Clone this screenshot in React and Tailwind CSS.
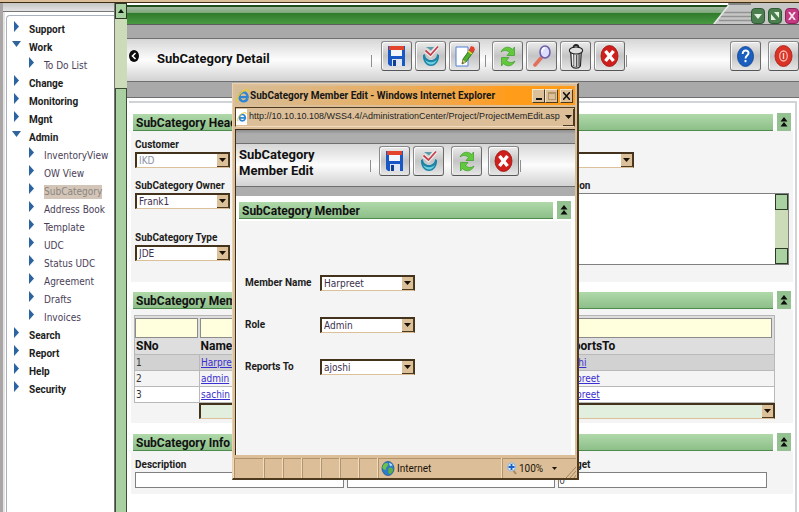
import React from "react";

const NAV = [
  { label: "Support" },
  { label: "Work", open: true, children: ["To Do List"] },
  { label: "Change" },
  { label: "Monitoring" },
  { label: "Mgnt" },
  {
    label: "Admin",
    open: true,
    children: [
      "InventoryView",
      "OW View",
      "SubCategory",
      "Address Book",
      "Template",
      "UDC",
      "Status UDC",
      "Agreement",
      "Drafts",
      "Invoices",
    ],
  },
  { label: "Search" },
  { label: "Report" },
  { label: "Help" },
  { label: "Security" },
];

const MEMBERS = [
  { no: 1, name: "Harpreet", reportsTo: "ajoshi", row: "bg-[#d2d2d2]" },
  { no: 2, name: "admin", reportsTo: "Harpreet", row: "bg-[#f4f4f4]" },
  { no: 3, name: "sachin", reportsTo: "Harpreet", row: "bg-white" },
];

/* ---------- icons ---------- */

function SaveIcon() {
  return (
    <svg width="19" height="22" viewBox="0 0 19 22">
      <path d="M1 1h17v20H3l-2-2z" fill="#1857c4" />
      <rect x="4" y="1" width="11" height="10" fill="#f3f6fb" />
      <rect x="2" y="1" width="15" height="4" fill="#e2452c" />
      <rect x="5" y="14" width="10" height="7" fill="#dfe6f0" />
      <rect x="6" y="15" width="3" height="6" fill="#123f96" />
    </svg>
  );
}

function CheckIcon() {
  return (
    <svg width="18" height="22" viewBox="0 0 18 22">
      <path d="M1 10c-.5 6 3 11 8 11s8.500-5 8-11l-2-1c0 3.500-2.500 6-6 6s-6-2.500-6-6z" fill="#1c84a6" />
      <path d="M3 14.500c2.500 3.500 9.500 3.500 12 0-1 3.500-3.500 5-6 5s-5-1.500-6-5z" fill="#6fd0e0" />
      <path d="M4 2h8l-3 3.500z" fill="#5b9aa8" />
      <path d="M3.500 5.500l5 4.500 7.500-8.500" fill="none" stroke="#f1f1f1" strokeWidth="4" />
      <path d="M3.500 5.500l5 4.500 7.500-8.500" fill="none" stroke="#c2414c" strokeWidth="1.800" />
    </svg>
  );
}

function EditIcon() {
  return (
    <svg width="20" height="22" viewBox="0 0 20 22">
      <path d="M1 2h12v19H1z" fill="#fff" stroke="#4f82d8" />
      <path d="M7 19l1-5 8-11 3 3-8 11z" fill="#4fae2c" stroke="#2a5f17" strokeWidth=".8" />
      <path d="M14 5l2-4 3 1 1 3-3 3z" fill="#e2422b" />
      <path d="M13 6l4 3" stroke="#f2d13a" strokeWidth="1.5" />
      <path d="M7 19l1-4 3 2z" fill="#eac17a" />
      <path d="M7 19l.6-2 1 .8z" fill="#222" />
    </svg>
  );
}

function RefreshIcon() {
  return (
    <svg width="18" height="21" viewBox="0 0 18 21">
      <path d="M2 6c2-5 8-6.500 11.500-2.500L15.500 1v8.500H8l2.500-3C8 4 4.500 4 2 6z" fill="#62c93c" stroke="#3b9c26" strokeWidth=".7" />
      <path d="M16 15c-2 5-8 6.500-11.500 2.500L2.500 20v-8.500H10l-2.500 3c2.500 2.500 6 2.500 8.500.5z" fill="#62c93c" stroke="#3b9c26" strokeWidth=".7" />
    </svg>
  );
}

function SearchIcon() {
  return (
    <svg width="20" height="22" viewBox="0 0 20 22">
      <path d="M9 13l-6 7" stroke="#e2705c" strokeWidth="3.5" strokeLinecap="round" />
      <ellipse cx="13" cy="7" rx="5" ry="6" fill="#dcdcfb" stroke="#6a5fae" strokeWidth="1.6" />
      <path d="M10 7c0-2 1-4 3-4" stroke="#fff" strokeWidth="1.5" fill="none" />
    </svg>
  );
}

function TrashIcon() {
  return (
    <svg width="16" height="26" viewBox="0 0 18 26" preserveAspectRatio="none">
      <path d="M3 9l1 14c2 3 8 3 10 0l1-14z" fill="#b9b9b9" stroke="#222" strokeWidth="1.2" />
      <path d="M6.500 11v12M9.500 12v12M12.500 11v12" stroke="#444" strokeWidth="1" />
      <path d="M8 11v12M5 11l.5 11" stroke="#fff" strokeWidth="1" />
      <ellipse cx="9" cy="7.500" rx="7.500" ry="3.500" fill="#e0e0e0" stroke="#222" strokeWidth="1.2" />
      <path d="M6 5c0-4 6-4 6 0" fill="none" stroke="#222" strokeWidth="1.8" />
    </svg>
  );
}

function CloseIcon() {
  return (
    <svg width="19" height="22" viewBox="0 0 19 22">
      <ellipse cx="9.500" cy="11" rx="8.500" ry="10.500" fill="#cf1f1c" stroke="#9c1512" strokeWidth=".8" />
      <path d="M5.500 6l8 10M13.500 6l-8 10" stroke="#fff" strokeWidth="3.400" />
    </svg>
  );
}

function HelpIcon() {
  return (
    <svg width="17" height="21" viewBox="0 0 18 21" preserveAspectRatio="none">
      <ellipse cx="9" cy="10.500" rx="8.500" ry="10" fill="#1a5fc0" stroke="#0d3f8f" strokeWidth=".8" />
      <path d="M6 8c0-5 6.500-4 6.200-.8C12 9.500 9 9.500 9 12.500" fill="none" stroke="#fff" strokeWidth="2" />
      <rect x="8" y="14" width="2" height="2.200" fill="#fff" />
    </svg>
  );
}

function PowerIcon() {
  return (
    <svg width="19" height="22" viewBox="0 0 20 22" preserveAspectRatio="none">
      <ellipse cx="10" cy="11" rx="9" ry="10.500" fill="#d93326" stroke="#a81d14" strokeWidth=".8" />
      <ellipse cx="10" cy="11" rx="4" ry="5" fill="none" stroke="#ffb9b0" strokeWidth="1.300" />
      <path d="M10 8v6" stroke="#ffd6d0" strokeWidth="1.500" />
    </svg>
  );
}

function IeIcon({ size }) {
  return (
    <svg width={size} height={size} viewBox="0 0 14 14" className="shrink-0">
      <path
        d="M11.500 9.500c-1.500 4-8 4-8-1.700s7.500-6 8.200.4H4.500"
        fill="none"
        stroke="#2e86d0"
        strokeWidth="2.300"
      />
      <path d="M1.500 13C-.5 10 4 2.500 10 1c2.500-.6 3.200.6 2.500 2" fill="none" stroke="#e3c93a" strokeWidth="1.400" />
    </svg>
  );
}

function GlobeIcon() {
  return (
    <svg width="14" height="15" viewBox="0 0 14 15" className="shrink-0">
      <ellipse cx="7" cy="7.500" rx="6" ry="7" fill="#2b7cc9" stroke="#1f5a94" strokeWidth=".8" />
      <path d="M3 3c2-2 5-1 4 1S5 6 5 8 2 8 1.500 7 2 4 3 3z" fill="#6cc24a" />
      <path d="M8 7c2-1 4 0 4 2s-2 4-3.500 4S7 8 8 7z" fill="#5cb23e" />
      <path d="M8 2c1.500 0 3 1 3.500 2.500L9 5z" fill="#bfe3f5" />
    </svg>
  );
}

function ZoomIcon() {
  return (
    <svg width="11" height="13" viewBox="0 0 11 13" className="shrink-0">
      <path d="M6 8l3 4" stroke="#a98a60" strokeWidth="2" />
      <circle cx="4.500" cy="5" r="4" fill="#d9ebfb" stroke="#7fa9d6" strokeWidth=".8" />
      <path d="M4.500 2v6M1.500 5h6" stroke="#1d5fc4" strokeWidth="1.800" />
    </svg>
  );
}

function NavArrow({ open }) {
  return open ? (
    <svg width="9" height="6" viewBox="0 0 9 6" className="shrink-0">
      <path d="M0 0h9L4.500 6z" fill="#30649c" />
    </svg>
  ) : (
    <svg width="9" height="11" viewBox="0 0 9 11" className="shrink-0">
      <path d="M2 0l5 5.500L2 11z" fill="#2b64a0" />
    </svg>
  );
}

/* ---------- shared controls ---------- */

function ToolButton({ label, children }) {
  return (
    <button
      type="button"
      aria-label={label}
      className="flex h-[30px] w-[31px] shrink-0 items-center justify-center rounded-[3px] border border-[#8a8a8a] border-b-[#555] border-r-[#6b6b6b] bg-linear-to-b from-[#ececec] via-[#c4c4c4] to-[#e6e6e6] shadow-[inset_1px_1px_0_#fafafa]"
    >
      {children}
    </button>
  );
}

function Separator() {
  return <span className="mt-[14px] h-3 w-px shrink-0 bg-[#8f8f8f]" />;
}

function ArrowCap() {
  return (
    <span className="pointer-events-none flex w-3 shrink-0 items-center justify-center border-b border-r border-[#4d3a1f] bg-[#dcc09a]">
      <svg width="7" height="4" viewBox="0 0 7 4">
        <path d="M0 0h7L3.500 4z" fill="#1a1208" />
      </svg>
    </span>
  );
}

function Select({ id, label, value, width, muted, tint }) {
  return (
    <span
      className={`flex h-4 border-b border-l-2 border-r border-t-2 border-b-[#dcc09a] border-l-[#43321c] border-r-[#43321c] border-t-[#43321c] ${
        tint ? "bg-[#e2efdf]" : "bg-white"
      } ${width}`}
    >
      <select
        id={id}
        aria-label={label}
        defaultValue={value}
        disabled={muted}
        className={`min-w-0 flex-1 appearance-none bg-transparent pl-[2px] text-[10px] leading-3 opacity-100 outline-none ${
          muted ? "text-[#8b90a5]" : "text-[#3d3050]"
        }`}
      >
        <option>{value}</option>
      </select>
      <ArrowCap />
    </span>
  );
}

function Field({ id, label, children, className = "" }) {
  return (
    <div className={`flex flex-col ${className}`}>
      <label htmlFor={id} className="font-['Roboto'] text-[10px] font-bold leading-[14px] text-[#1c1c1c]">
        {label}
      </label>
      {children}
    </div>
  );
}

function SectionHeader({ title }) {
  return (
    <div className="flex items-center gap-1">
      <h2 className="h-[17px] min-w-0 flex-1 overflow-hidden whitespace-nowrap border-b border-[#4d8a4c] bg-linear-to-b from-[#b0d9aa] to-[#8dbf89] pl-[3px] font-['Roboto'] text-xs font-bold leading-[18px] text-[#111]">
        {title}
      </h2>
      <button
        type="button"
        aria-label={`Collapse ${title}`}
        className="flex h-[18px] w-[14px] items-center justify-center bg-[#93c18f]"
      >
        <svg width="8" height="10" viewBox="0 0 8 10">
          <path d="M4 0l3.500 4.500h-7zM4 5l3.500 4.500h-7z" fill="#0d0d0d" />
        </svg>
      </button>
    </div>
  );
}

/* ---------- sidebar ---------- */

function Sidebar() {
  return (
    <div className="flex w-[127px] shrink-0">
      <div className="w-[3px] bg-[#aaa6a6]" />
      <div className="flex min-w-0 flex-1 flex-col border-r border-[#777]">
        <div className="h-[9px] border-b border-[#777] bg-linear-to-b from-[#c4c4c4] to-[#e4e4e4]" />
        <div className="flex flex-1 border-l-2 border-[#e4e4e4] bg-white pt-[3px]">
          <nav className="ml-px min-w-0 flex-1 rounded-tl border-l border-t border-[#a9b2ba] pt-[5px]">
            <ul>
              {NAV.map((item) => (
                <li key={item.label}>
                  <a
                    href="#"
                    className="flex h-[18px] items-center font-['Roboto'] text-[10px] font-bold leading-[18px] text-[#1c1c1c]"
                  >
                    <span className="flex h-[18px] w-[22px] items-center pb-2 pl-[5px]">
                      <NavArrow open={item.open} />
                    </span>
                    {item.label}
                  </a>
                  {item.children && (
                    <ul>
                      {item.children.map((child) => (
                        <li key={child}>
                          <a
                            href="#"
                            className="flex h-[18px] items-center whitespace-nowrap pl-[15px] text-[10px] leading-[18px] text-[#4a3d58]"
                          >
                            <span className="flex h-[18px] w-[22px] items-center pb-2 pl-[5px]">
                              <NavArrow />
                            </span>
                            <span
                              className={
                                child === "SubCategory" ? "bg-[#d3c6b8] leading-[14px] text-[#8b8580]" : ""
                              }
                            >
                              {child}
                            </span>
                          </a>
                        </li>
                      ))}
                    </ul>
                  )}
                </li>
              ))}
            </ul>
          </nav>
        </div>
      </div>
      <div className="flex w-3 flex-col bg-[#cddcb8]">
        <button
          type="button"
          aria-label="Scroll up"
          className="flex h-4 items-center justify-center border border-[#2c3a26] bg-[#a9d1a1]"
        >
          <svg width="6" height="4" viewBox="0 0 6 4">
            <path d="M3 0l3 4H0z" fill="#0b1a0b" />
          </svg>
        </button>
        <div className="mt-[69px] flex-1 border border-b-0 border-[#3c4a36] bg-[#a8d0a0]" />
      </div>
    </div>
  );
}

/* ---------- main page ---------- */

function Banner() {
  return (
    <div className="flex h-[22px] border-b border-[#5d5d5d] bg-[#c6c6c6]">
      <div className="flex min-w-0 flex-1 flex-col border-t-2 border-white">
        <div className="h-2 border-t-2 border-[#1f4d1c] bg-linear-to-b from-[#a3b8a1] to-[#7ba878]" />
        <div className="flex-1 bg-linear-to-b from-[#2f7a2b] to-[#489a41]" />
      </div>
      <svg width="40" height="21" viewBox="0 0 40 21" className="shrink-0">
        <defs>
          <linearGradient id="band-top" gradientUnits="userSpaceOnUse" x1="0" y1="4" x2="0" y2="10">
            <stop offset="0" stopColor="#a3b8a1" />
            <stop offset="1" stopColor="#7ba878" />
          </linearGradient>
          <linearGradient id="band-bottom" gradientUnits="userSpaceOnUse" x1="0" y1="10" x2="0" y2="21">
            <stop offset="0" stopColor="#2f7a2b" />
            <stop offset="1" stopColor="#489a41" />
          </linearGradient>
        </defs>
        <rect width="40" height="21" fill="#c6c6c6" />
        <path d="M8 9.500h32M8 13.500h32M8 17.500h32" stroke="#929292" strokeWidth="1.500" />
        <path d="M0 10h11L2 21H0z" fill="url(#band-bottom)" />
        <path d="M0 4h15.500L11 10H0z" fill="url(#band-top)" />
        <path d="M0 2h17l-1.500 2H0z" fill="#1f4d1c" />
        <path d="M0 0h18v2H0z" fill="#fff" />
        <path d="M18 2L3 21" stroke="#e8e8e8" strokeWidth="1.500" />
        <path d="M17 1h23" stroke="#444" strokeWidth="1" />
      </svg>
      <div className="flex items-center gap-[3px] pt-[5px]">
        <button type="button" aria-label="Minimize" className="flex h-4 w-[14px] items-center justify-center rounded-sm border border-[#2f5a33] bg-[#4c7f50]">
          <svg width="8" height="5" viewBox="0 0 8 5"><path d="M0 0h8L4 5z" fill="#e3f3e0" /></svg>
        </button>
        <button type="button" aria-label="Restore" className="flex h-4 w-[14px] items-center justify-center rounded-sm border border-[#2f5a33] bg-[#4c7f50]">
          <svg width="8" height="8" viewBox="0 0 8 8">
            <path d="M0 2v6h5zM8 6V0H3z" fill="#e3f3e0" />
            <path d="M2 1l5 6" stroke="#4c7f50" strokeWidth="1.500" />
          </svg>
        </button>
        <button type="button" aria-label="Close" className="flex h-4 w-[14px] items-center justify-center rounded-sm border border-[#8f1f5c] bg-[#c23a80]">
          <svg width="8" height="8" viewBox="0 0 8 8"><path d="M1 0l6 8M7 0L1 8" stroke="#fbe3f0" strokeWidth="1.800" /></svg>
        </button>
      </div>
    </div>
  );
}

function PageToolbar() {
  return (
    <>
      <div className="h-[13px] bg-[#a9a9a9]" />
      <header className="flex h-11 items-start border-y border-[#6f6f6f] bg-linear-to-b from-[#d6d6d6] via-[#fdfdfd] to-[#d2d2d2] pt-[2px]">
        <button type="button" aria-label="Back" className="ml-[2px] mt-[9px]">
          <svg width="10" height="12" viewBox="0 0 10 12">
            <ellipse cx="5" cy="6" rx="5" ry="6" fill="#0a0a0a" />
            <path d="M6.500 3L3.500 6l3 3" fill="none" stroke="#fff" strokeWidth="1.600" />
          </svg>
        </button>
        <h1 className="ml-[18px] w-[214px] pt-[10px] font-['Roboto'] text-[13px] font-bold leading-4 text-[#111]">
          SubCategory Detail
        </h1>
        <div className="flex">
          <Separator />
          <div className="ml-[9px] mr-[5px] flex gap-[3px]">
            <ToolButton label="Save"><SaveIcon /></ToolButton>
            <ToolButton label="Save and close"><CheckIcon /></ToolButton>
            <ToolButton label="Edit"><EditIcon /></ToolButton>
          </div>
          <Separator />
          <div className="ml-[6px] flex gap-[3px]">
            <ToolButton label="Refresh"><RefreshIcon /></ToolButton>
            <ToolButton label="Search"><SearchIcon /></ToolButton>
            <ToolButton label="Delete"><TrashIcon /></ToolButton>
            <ToolButton label="Cancel"><CloseIcon /></ToolButton>
          </div>
          <span className="ml-px flex"><Separator /></span>
        </div>
        <div className="ml-auto flex gap-[7px]">
          <ToolButton label="Help"><HelpIcon /></ToolButton>
          <ToolButton label="Log off"><PowerIcon /></ToolButton>
        </div>
      </header>
      <div className="h-4 border-b border-[#6f6f6f] bg-[#a9a9a9]" />
    </>
  );
}

function HeaderSection() {
  return (
    <section>
      <SectionHeader title="SubCategory Header" />
      <div className="-mx-[2px] flex h-[151px] bg-[#f4f4f4] pl-1 pt-[7px]">
        <div className="flex w-[404px] flex-col">
          <Field id="customer" label="Customer">
            <Select id="customer" value="IKD" width="w-[95px]" muted />
          </Field>
          <Field id="owner" label="SubCategory Owner" className="mt-[11px]">
            <Select id="owner" value="Frank1" width="w-[95px]" />
          </Field>
          <Field id="type" label="SubCategory Type" className="mt-[22px]">
            <Select id="type" value="JDE" width="w-[95px]" />
          </Field>
        </div>
        <div className="flex min-w-0 flex-1 flex-col pr-1">
          <div className="pt-[14px]">
            <Select label="Status" value="" width="w-[95px]" />
          </div>
          <Field id="description" label="Description" className="mt-[11px]">
            <div className="flex h-[72px] border border-[#808080] bg-white">
              <textarea id="description" className="min-w-0 flex-1 resize-none outline-none" />
              <div className="flex w-[13px] flex-col justify-between bg-[#cddcb8]">
                <button type="button" aria-label="Scroll up" className="h-4 border border-[#2c3a26] bg-[#a9d1a1]" />
                <button type="button" aria-label="Scroll down" className="h-4 border border-[#2c3a26] bg-[#a9d1a1]" />
              </div>
            </div>
          </Field>
        </div>
      </div>
    </section>
  );
}

function MembersSection() {
  return (
    <section className="mt-[9px]">
      <SectionHeader title="SubCategory Members" />
      <div className="-mx-[2px] h-[114px] bg-[#f4f4f4] pl-[3px] pr-[18px] pt-[6px]">
        <table className="w-full table-fixed border-collapse border border-[#b5b5b5] text-left text-[10px] leading-[15px] text-[#333]">
          <colgroup>
            <col className="w-[65px]" />
            <col className="w-[359px]" />
            <col />
          </colgroup>
          <thead>
            <tr className="h-[23px] bg-[#dedede]">
              {["SNo", "Name", "ReportsTo"].map((c) => (
                <td key={c} className="p-0 pt-[2px] pr-[2px]">
                  <input aria-label={`Filter ${c}`} className="block h-5 w-full border border-[#8c8c8c] bg-[#ffffde] outline-none" />
                </td>
              ))}
            </tr>
            <tr className="h-4 bg-[#dedede]">
              {["SNo", "Name", "ReportsTo"].map((c) => (
                <th key={c} className="p-0 pl-px font-['Roboto'] text-xs font-bold leading-[15px] text-[#111]">
                  {c}
                </th>
              ))}
            </tr>
          </thead>
          <tbody>
            {MEMBERS.map((m) => (
              <tr key={m.no} className={`h-4 ${m.row}`}>
                <td className="border border-[#b9b9b9] p-0 pl-px">{m.no}</td>
                <td className="border border-[#b9b9b9] p-0 pl-px">
                  <a href="#" className="text-[#3a2fd0] underline">{m.name}</a>
                </td>
                <td className="border border-[#b9b9b9] p-0 pl-px">
                  <a href="#" className="text-[#3a2fd0] underline">{m.reportsTo}</a>
                </td>
              </tr>
            ))}
          </tbody>
        </table>
        <div className="pl-[65px]">
          <Select label="Add member" value="" width="w-full" tint />
        </div>
      </div>
    </section>
  );
}

function InfoSection() {
  const input = "h-4 w-full border border-[#808080] bg-white text-[10px] text-[#444] outline-none";
  return (
    <section className="mt-[10px]">
      <SectionHeader title="SubCategory Info" />
      <div className="-mx-[2px] h-[43px] bg-[#f4f4f4] pl-1 pr-[26px] pt-[7px]">
        <div className="grid grid-cols-3 gap-[3px]">
          <Field id="info-description" label="Description">
            <input id="info-description" className={input} />
          </Field>
          <div className="pt-[14px]">
            <input aria-label="Details" className={`block ${input}`} />
          </div>
          <Field id="budget" label="Budget">
            <input id="budget" defaultValue="0" className={input} />
          </Field>
        </div>
      </div>
    </section>
  );
}

/* ---------- member dialog ---------- */

function DialogRow({ id, label, value }) {
  return (
    <div className="flex h-4 items-center">
      <label htmlFor={id} className="w-[75px] shrink-0 font-['Roboto'] text-[10px] font-bold leading-4 text-[#1c1c1c]">
        {label}
      </label>
      <Select id={id} value={value} width="w-[95px]" />
    </div>
  );
}

function MemberDialog() {
  const caption =
    "flex h-[14px] w-[13px] items-center justify-center border border-b-[#4d3a1f] border-l-[#f5e6d0] border-r-[#4d3a1f] border-t-[#f5e6d0] bg-[#dcc09a]";
  const cell = "border-l border-t border-[#b3936a] shadow-[-1px_0_0_#f0dcc0]";
  return (
    <div
      role="dialog"
      aria-label="SubCategory Member Edit"
      className="absolute left-[232px] top-[83px] flex h-[397px] w-[347px] flex-col border-b-2 border-l border-r-2 border-t border-b-[#4d3a1f] border-l-[#e8d2b4] border-r-[#4d3a1f] border-t-[#e8d2b4] bg-[#dcbf98]"
    >
      <div className="mx-[2px] mt-[2px] flex h-[19px] items-center bg-linear-to-r from-[#d6bd98] via-[#e9ac5a] via-50% to-[#ff9c1a] to-80% pl-px pr-[2px]">
        <IeIcon size={14} />
        <span className="min-w-0 flex-1 whitespace-nowrap font-['Roboto'] text-[10px] font-bold leading-4 text-[#161616]">
          SubCategory Member Edit - Windows Internet Explorer
        </span>
        <button type="button" aria-label="Minimize" className={caption}>
          <span className="mt-[6px] h-[2px] w-[6px] bg-[#111]" />
        </button>
        <button type="button" aria-label="Maximize" className={caption}>
          <span className="h-[8px] w-[8px] border border-t-2 border-[#b3936a]" />
        </button>
        <button type="button" aria-label="Close" className={`ml-[2px] ${caption}`}>
          <svg width="7" height="8" viewBox="0 0 7 8"><path d="M0 0l7 8M7 0L0 8" stroke="#111" strokeWidth="1.500" /></svg>
        </button>
      </div>
      <div className="mx-[2px] mt-[2px] flex h-5 items-center border border-[#4d3a1f] border-b-[#f0dcc0]">
        <span className="flex h-4 w-[11px] items-center justify-center bg-white">
          <IeIcon size={10} />
        </span>
        <input
          aria-label="Address"
          readOnly
          defaultValue="http://10.10.10.108/WSS4.4/AdministrationCenter/Project/ProjectMemEdit.asp"
          className="ml-[2px] min-w-0 flex-1 bg-transparent font-['Liberation_Sans'] text-[9px] text-[#222] outline-none"
        />
        <button type="button" aria-label="Show addresses" className="flex h-[17px] w-[11px] items-center justify-center border-b border-r border-[#4d3a1f]">
          <svg width="7" height="4" viewBox="0 0 7 4"><path d="M0 0h7L3.500 4z" fill="#1a1208" /></svg>
        </button>
      </div>
      <div className="mx-[2px] mt-[2px] flex min-h-0 flex-1 flex-col border-l border-t border-[#3c2d18] bg-white">
        <div className="h-[13px] bg-linear-to-b from-[#8c8c8c] to-[#adadad] to-30%" />
        <div className="flex h-11 items-start border-y border-[#6f6f6f] bg-linear-to-b from-[#d6d6d6] via-[#fdfdfd] to-[#d2d2d2] pt-[2px]">
          <h1 className="w-[134px] pl-[3px] pt-px font-['Roboto'] text-[13px] font-bold leading-4 text-[#111]">
            SubCategory
            <br />
            Member Edit
          </h1>
          <Separator />
          <div className="ml-2 flex gap-[3px]">
            <ToolButton label="Save"><SaveIcon /></ToolButton>
            <ToolButton label="Save and close"><CheckIcon /></ToolButton>
          </div>
          <div className="ml-[7px] mr-px flex gap-[6px]">
            <ToolButton label="Refresh"><RefreshIcon /></ToolButton>
            <ToolButton label="Cancel"><CloseIcon /></ToolButton>
          </div>
          <Separator />
        </div>
        <div className="h-[9px] bg-[#adadad]" />
        <div className="mr-[4px] mt-[5px] pl-[3px]">
          <SectionHeader title="SubCategory Member" />
        </div>
        <div className="ml-px mr-1 mt-[2px] flex flex-1 flex-col gap-[26px] bg-[#f4f4f4] pl-2 pt-[54px]">
          <DialogRow id="member-name" label="Member Name" value="Harpreet" />
          <DialogRow id="member-role" label="Role" value="Admin" />
          <DialogRow id="member-reports" label="Reports To" value="ajoshi" />
        </div>
      </div>
      <div className="mx-px mt-[3px] flex h-5 font-['Roboto'] text-[10px] leading-5 text-[#1c1408]">
        <span className={`w-[30px] ${cell}`} />
        <span className={`w-[19px] ${cell}`} />
        <span className={`w-[19px] ${cell}`} />
        <span className={`w-[19px] ${cell}`} />
        <span className={`w-[19px] ${cell}`} />
        <span className={`w-[19px] ${cell}`} />
        <span className={`w-[19px] ${cell}`} />
        <span className={`flex min-w-0 flex-1 items-center gap-[2px] pl-[2px] ${cell}`}>
          <GlobeIcon />
          Internet
        </span>
        <span className={`flex w-[74px] items-center gap-px pl-1 ${cell}`}>
          <ZoomIcon />
          100%
          <svg width="5" height="3" viewBox="0 0 5 3" className="ml-2"><path d="M0 0h5L2.500 3z" fill="#1a1208" /></svg>
          <svg width="10" height="12" viewBox="0 0 10 12" className="ml-auto self-end">
            <path d="M0 12L10 1M4 12l6-7M8 12l2-3" stroke="#a5855a" />
          </svg>
        </span>
      </div>
    </div>
  );
}

export default function App() {
  return (
    <div className="relative flex min-h-screen flex-col overflow-hidden bg-white font-['DejaVu_Sans_Condensed','DejaVu_Sans',sans-serif]">
      <div className="h-[3px] border-b border-[#3c2d18] bg-[#dcbf98]" />
      <div className="flex flex-1">
        <Sidebar />
        <main className="flex min-w-0 flex-1 flex-col">
          <Banner />
          <PageToolbar />
          <div className="mx-[2px] mt-[3px] flex-1 border-r-2 border-t-2 border-[#d0d3d8] px-1 pb-4 pt-[10px]">
            <HeaderSection />
            <MembersSection />
            <InfoSection />
          </div>
        </main>
      </div>
      <MemberDialog />
    </div>
  );
}
